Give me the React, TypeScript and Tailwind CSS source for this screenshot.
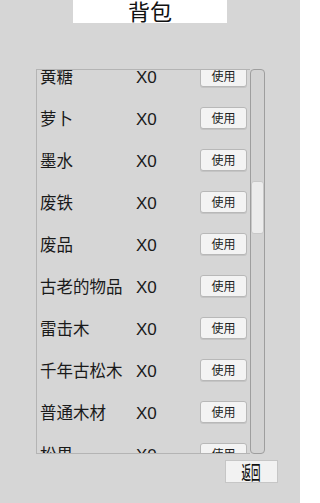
const items = ['黄糖', '萝卜', '墨水', '废铁', '废品', '古老的物品', '雷击木', '千年古松木', '普通木材', '松果'];

const font = { fontFamily: '"Noto Sans CJK SC", "Liberation Sans", sans-serif' };

export default function App() {
  return (
    <div className="w-[300px] h-[503px] bg-[#d6d6d6] flex flex-col overflow-hidden" style={font}>
      <div className="mx-auto w-[154px] h-[23px] bg-white flex items-start justify-center text-[22px] leading-[21px] text-[#111]">
        背包
      </div>

      <div className="mt-[46px] ml-[36px] flex h-[385px]">
        <div className="w-[214px] h-full border-l border-t border-b border-[#b4b4b4] overflow-hidden">
          <div className="-mt-[15px]">
            {items.map((name) => (
              <div key={name} className="h-[42px] flex items-center text-[16.5px] leading-none text-[#1a1a1a]">
                <span className="w-[99px] pl-[3px] whitespace-nowrap">{name}</span>
                <span className="w-[64px] text-[17px] leading-none translate-y-[1px]" style={{ fontFamily: '"Liberation Sans", sans-serif' }}>X0</span>
                <button className="w-[47px] h-[22px] rounded-[3px] border border-[#b8b8b8] bg-[#f3f3f3] text-[12px] text-[#222] flex items-center justify-center shadow-[0_1px_0_#c4c4c4]">
                  使用
                </button>
              </div>
            ))}
          </div>
        </div>
        <div className="w-[15px] h-full rounded-[4px] border border-[#9e9e9e] bg-[#d3d3d3] relative">
          <div className="absolute left-0 right-0 top-[111px] h-[53px] rounded-[3px] bg-[#ececec] border border-[#c8c8c8]"></div>
        </div>
      </div>

      <div className="mt-[6px] ml-[225px] w-[53px] h-[23px] bg-[#f2f2f2] border border-[#c6c6c6] flex items-center justify-center overflow-hidden">
        <span className="inline-block text-[19px] leading-none font-medium text-[#111] scale-x-50">返回</span>
      </div>
    </div>
  );
}
